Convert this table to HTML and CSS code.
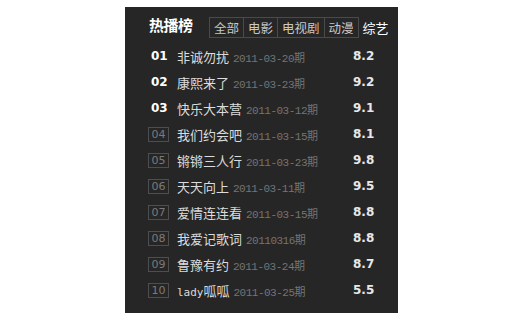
FILE: index.html
```html
<!DOCTYPE html>
<html lang="zh">
<head>
<meta charset="utf-8">
<title>热播榜</title>
<link rel="stylesheet" href="styles.css">
</head>
<body>
<div class="panel">
  <div class="head">
    <h2 class="title">热播榜</h2>
    <ul class="tabs">
      <li class="tab">全部</li>
      <li class="tab">电影</li>
      <li class="tab">电视剧</li>
      <li class="tab">动漫</li>
      <li class="tab tab-active">综艺</li>
    </ul>
  </div>
  <ol class="list">
    <li class="row"><span class="rank top">01</span><span class="info"><span class="name">非诚勿扰</span><span class="date">2011-03-20期</span></span><span class="score">8.2</span></li>
    <li class="row"><span class="rank top">02</span><span class="info"><span class="name">康熙来了</span><span class="date">2011-03-23期</span></span><span class="score">9.2</span></li>
    <li class="row"><span class="rank top">03</span><span class="info"><span class="name">快乐大本营</span><span class="date">2011-03-12期</span></span><span class="score">9.1</span></li>
    <li class="row"><span class="rank">04</span><span class="info"><span class="name">我们约会吧</span><span class="date">2011-03-15期</span></span><span class="score">8.1</span></li>
    <li class="row"><span class="rank">05</span><span class="info"><span class="name">锵锵三人行</span><span class="date">2011-03-23期</span></span><span class="score">9.8</span></li>
    <li class="row"><span class="rank">06</span><span class="info"><span class="name">天天向上</span><span class="date">2011-03-11期</span></span><span class="score">9.5</span></li>
    <li class="row"><span class="rank">07</span><span class="info"><span class="name">爱情连连看</span><span class="date">2011-03-15期</span></span><span class="score">8.8</span></li>
    <li class="row"><span class="rank">08</span><span class="info"><span class="name">我爱记歌词</span><span class="date">20110316期</span></span><span class="score">8.8</span></li>
    <li class="row"><span class="rank">09</span><span class="info"><span class="name">鲁豫有约</span><span class="date">2011-03-24期</span></span><span class="score">8.7</span></li>
    <li class="row"><span class="rank">10</span><span class="info"><span class="name"><span class="latin">lady</span>呱呱</span><span class="date">2011-03-25期</span></span><span class="score">5.5</span></li>
  </ol>
</div>
</body>
</html>
```

FILE: styles.css
```css
html, body {
  margin: 0;
  padding: 0;
  background: #ffffff;
}

.panel {
  margin: 7px 0 0 125px;
  width: 273px;
  height: 306px;
  background: #262626;
  box-sizing: border-box;
  padding-left: 24px;
  font-family: "Noto Sans CJK SC", sans-serif;
}

.head {
  display: flex;
  align-items: flex-start;
  height: 36px;
  box-sizing: border-box;
  padding-top: 9px;
}

.title {
  margin: 0;
  font-size: 15px;
  line-height: 17px;
  font-weight: bold;
  color: #ffffff;
  width: 60px;
  letter-spacing: -0.5px;
}

.tabs {
  list-style: none;
  margin: 1px 0 0 0;
  padding: 0;
  display: flex;
}

.tab {
  font-size: 12.5px;
  line-height: 19px;
  color: #c8c8c8;
  padding: 0 4px;
  border: 1px solid #4a4a4a;
  border-left: none;
}

.tab:first-child {
  border-left: 1px solid #4a4a4a;
}

.tab-active {
  border: none;
  color: #ffffff;
  padding: 1px 4px;
  font-size: 13px;
}

.list {
  list-style: none;
  margin: 0;
  padding: 0;
}

.row {
  display: flex;
  align-items: center;
  height: 26px;
}

.rank {
  width: 19px;
  height: 13px;
  margin-right: 8px;
  margin-left: -1px;
  border: 1px solid #4e4e4e;
  color: #7a7a7a;
  font-family: "DejaVu Sans", sans-serif;
  font-size: 11px;
  line-height: 13px;
  text-align: center;
  flex: none;
}

.rank.top {
  border-color: transparent;
  color: #ffffff;
  font-weight: bold;
  font-size: 12px;
  text-align: left;
  padding-left: 2px;
  width: 17px;
}

.info {
  flex: 1;
  display: flex;
  align-items: baseline;
  white-space: nowrap;
}

.name {
  font-size: 13px;
  color: #dcdcdc;
}

.latin {
  font-family: "DejaVu Sans Mono", monospace;
  font-size: 11px;
}

.date {
  font-family: "Liberation Mono", "Noto Sans CJK SC", monospace;
  font-size: 11px;
  letter-spacing: -0.5px;
  color: #747474;
  margin-left: 4px;
}

.score {
  width: 30px;
  margin-right: 15px;
  font-family: "DejaVu Sans", sans-serif;
  font-size: 12px;
  font-weight: bold;
  color: #e8e8e8;
  flex: none;
}
```
